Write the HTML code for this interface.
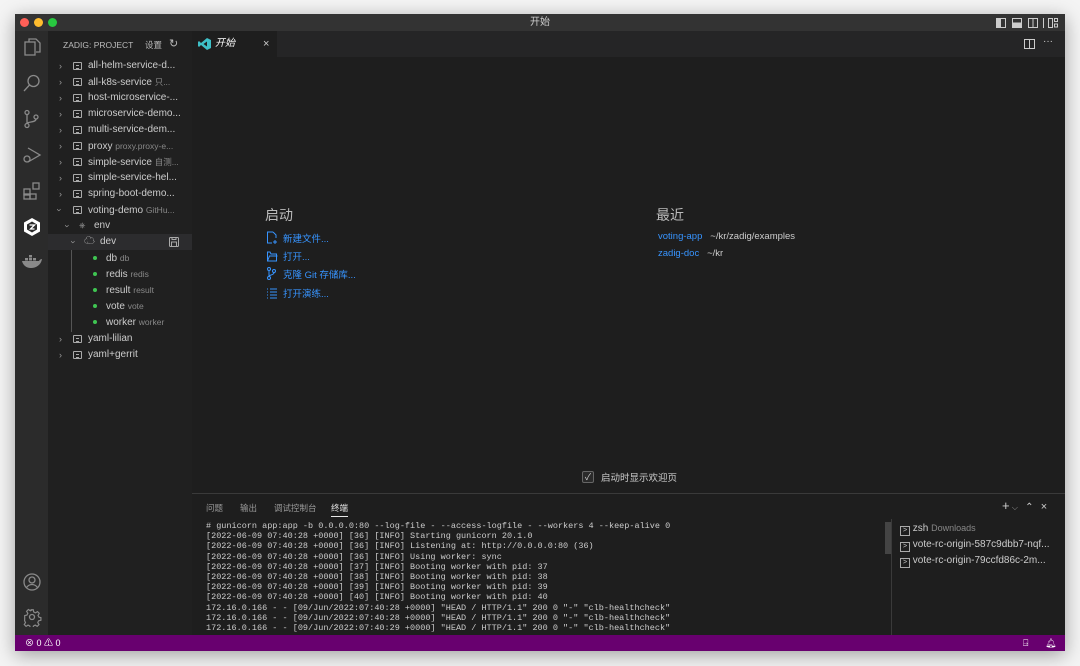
<!DOCTYPE html>
<html><head><meta charset="utf-8"><style>
*{margin:0;padding:0;box-sizing:border-box}
body{width:1080px;height:666px;background:#f4f4f4;position:relative;overflow:hidden;font-family:"Liberation Sans","Noto Sans CJK SC",sans-serif;color:#ccc}
.win{position:absolute;left:15px;top:14px;width:1050px;height:637px;background:#1e1e1e;box-shadow:0 4px 18px rgba(0,0,0,.35);overflow:hidden}
.a{position:absolute}
.title{left:0;top:0;width:1050px;height:17px;background:#333;text-align:center;font-size:10px;line-height:17px;color:#ccc}
.dot{position:absolute;top:4px;width:9px;height:9px;border-radius:50%}
.act{left:0;top:17px;width:33px;height:604px;background:#2b2b2b}
.side{left:33px;top:17px;width:144px;height:604px;background:#202020;font-size:10px}
.row{position:absolute;left:0;width:144px;height:16px;line-height:16px;white-space:nowrap;color:#ccc}
.row .c{position:absolute;top:0;color:#999;font-size:9px}
.row .d{color:#888;font-size:8.5px}
.fi{position:absolute;top:4px;width:9px;height:8px;border:1px solid #aaa;border-radius:1px}
.fi:after{content:"";position:absolute;left:2px;top:2px;width:3px;height:2px;border-top:1px solid #aaa;border-bottom:1px solid #aaa}
.tabs{left:177px;top:17px;width:873px;height:26px;background:#252526}
.tab{left:177px;top:17px;width:85px;height:26px;background:#1e1e1e;font-size:10px;line-height:26px}
.lnk{color:#3794ff;font-size:9.5px}
.panel{left:177px;top:479px;width:873px;height:142px;background:#1e1e1e;border-top:1px solid #3a3a3a}
.term{font-family:"Liberation Mono",monospace;font-size:8.5px;line-height:10.2px;color:#ccc;white-space:pre}
.status{left:0;top:621px;width:1050px;height:16px;background:#68006f;color:#fff;font-size:9px;line-height:16px}
svg{position:absolute}
</style></head><body>
<div class="win">
<div class="a title">开始
<span class="dot" style="left:5px;background:#fe5f57"></span><span class="dot" style="left:19px;background:#febc2e"></span><span class="dot" style="left:33px;background:#28c840"></span>
</div>
<svg style="left:980px;top:3px" width="65" height="12" viewBox="0 0 65 12" fill="none" stroke="#ccc" stroke-width="1"><rect x="1.5" y="1.5" width="9" height="9"/><rect x="1.5" y="1.5" width="4" height="9" fill="#ccc"/><rect x="17.5" y="1.5" width="9" height="9"/><rect x="17.5" y="6" width="9" height="4.5" fill="#ccc"/><rect x="33.5" y="1.5" width="9" height="9"/><line x1="38" y1="1.5" x2="38" y2="10.5"/><line x1="48.5" y1="1" x2="48.5" y2="11"/><rect x="53.5" y="1.5" width="4" height="9"/><rect x="59.5" y="1.5" width="3" height="3"/><rect x="59.5" y="7" width="3" height="3"/></svg>

<div class="a act">
<svg style="left:7px;top:6px" width="20" height="20" viewBox="0 0 20 20" fill="none" stroke="#8a8a8a" stroke-width="1.3"><path d="M7 5V2h7l4 4v9h-4"/><rect x="3" y="5" width="10" height="13"/></svg>
<svg style="left:7px;top:42px" width="20" height="20" viewBox="0 0 20 20" fill="none" stroke="#8a8a8a" stroke-width="1.3"><circle cx="11.5" cy="8" r="5.5"/><path d="M7.5 12L2 18"/></svg>
<svg style="left:7px;top:78px" width="20" height="20" viewBox="0 0 20 20" fill="none" stroke="#8a8a8a" stroke-width="1.3"><circle cx="5" cy="3.5" r="2"/><circle cx="5" cy="16.5" r="2"/><circle cx="14" cy="8" r="2"/><path d="M5 5.5v9M14 10c0 4-9 2-9 5"/></svg>
<svg style="left:7px;top:114px" width="20" height="20" viewBox="0 0 20 20" fill="none" stroke="#8a8a8a" stroke-width="1.3"><path d="M6 3l12 7-12 7"/><circle cx="5" cy="14" r="3"/></svg>
<svg style="left:7px;top:150px" width="20" height="20" viewBox="0 0 20 20" fill="none" stroke="#8a8a8a" stroke-width="1.3"><rect x="2" y="8" width="6" height="6"/><rect x="2" y="13" width="6" height="5"/><rect x="8" y="13" width="6" height="5"/><rect x="11" y="2" width="6" height="6"/></svg>
<svg style="left:7px;top:186px" width="20" height="20" viewBox="0 0 20 20"><path d="M10 1l8 4.5v9L10 19l-8-4.5v-9z" fill="#fff"/><path d="M10 4.5l5 3v5l-5 3-5-3v-5z" fill="#2b2b2b"/><path d="M7.5 8h5l-4 4h4" stroke="#fff" stroke-width="1.3" fill="none"/></svg>
<svg style="left:6px;top:222px" width="22" height="16" viewBox="0 0 22 16"><path d="M1 8h17c1-2 3-2 3-2-1 6-6 9-11 9C5 15 2 12 1 8z" fill="#8a8a8a"/><rect x="4" y="5" width="3" height="2.5" fill="#8a8a8a"/><rect x="8" y="5" width="3" height="2.5" fill="#8a8a8a"/><rect x="12" y="5" width="3" height="2.5" fill="#8a8a8a"/><rect x="8" y="2" width="3" height="2.5" fill="#8a8a8a"/></svg>
<svg style="left:7px;top:541px" width="20" height="20" viewBox="0 0 20 20" fill="none" stroke="#8a8a8a" stroke-width="1.3"><circle cx="10" cy="10" r="8"/><circle cx="10" cy="8" r="3"/><path d="M4.5 15.5c3-4 8-4 11 0"/></svg>
<svg style="left:7px;top:576px" width="20" height="20" viewBox="0 0 20 20" fill="none" stroke="#8a8a8a" stroke-width="1.3"><circle cx="10" cy="10" r="2.5"/><path d="M8.5 2h3l.5 2.5 2 1 2.2-1.4 2 2-1.4 2.2 1 2 2.2.5v3l-2.5.5-1 2 1.4 2.2-2 2-2.2-1.4-2 1-.5 2.5h-3l-.5-2.5-2-1-2.2 1.4-2-2 1.4-2.2-1-2L2 11.5v-3l2.5-.5 1-2-1.4-2.2 2-2 2.2 1.4 2-1z" transform="scale(.9) translate(1 1)"/></svg>
</div>

<div class="a side">
<div class="row" style="top:6px;left:15px;font-size:8.5px;color:#bbb">ZADIG: PROJECT<span style="position:absolute;left:82px">设置</span><span style="position:absolute;left:106px;font-size:11px;top:-1px">↻</span></div>
<div class="row" style="top:27px"><span class="c" style="left:11px">›</span><i class="fi" style="left:25px"></i><span style="position:absolute;left:40px">all-helm-service-d...</span></div>
<div class="row" style="top:43px"><span class="c" style="left:11px">›</span><i class="fi" style="left:25px"></i><span style="position:absolute;left:40px">all-k8s-service <span class="d">只...</span></span></div>
<div class="row" style="top:59px"><span class="c" style="left:11px">›</span><i class="fi" style="left:25px"></i><span style="position:absolute;left:40px">host-microservice-...</span></div>
<div class="row" style="top:75px"><span class="c" style="left:11px">›</span><i class="fi" style="left:25px"></i><span style="position:absolute;left:40px">microservice-demo...</span></div>
<div class="row" style="top:91px"><span class="c" style="left:11px">›</span><i class="fi" style="left:25px"></i><span style="position:absolute;left:40px">multi-service-dem...</span></div>
<div class="row" style="top:107px"><span class="c" style="left:11px">›</span><i class="fi" style="left:25px"></i><span style="position:absolute;left:40px">proxy <span class="d">proxy.proxy-e...</span></span></div>
<div class="row" style="top:123px"><span class="c" style="left:11px">›</span><i class="fi" style="left:25px"></i><span style="position:absolute;left:40px">simple-service <span class="d">自测...</span></span></div>
<div class="row" style="top:139px"><span class="c" style="left:11px">›</span><i class="fi" style="left:25px"></i><span style="position:absolute;left:40px">simple-service-hel...</span></div>
<div class="row" style="top:155px"><span class="c" style="left:11px">›</span><i class="fi" style="left:25px"></i><span style="position:absolute;left:40px">spring-boot-demo...</span></div>
<div class="row" style="top:171px"><span class="c" style="left:10px;transform:rotate(90deg)">›</span><i class="fi" style="left:25px"></i><span style="position:absolute;left:40px">voting-demo <span class="d">GitHu...</span></span></div>
<div class="row" style="top:187px"><span class="c" style="left:18px;transform:rotate(90deg)">›</span><span style="position:absolute;left:31px;color:#999;font-size:8px">⎈</span><span style="position:absolute;left:46px">env</span></div>
<div class="row" style="top:203px;background:#2c2c2e"><span class="c" style="left:24px;transform:rotate(90deg)">›</span><span style="position:absolute;left:36px;color:#bbb;font-size:11px;top:-1px">☁</span><span style="position:absolute;left:52px">dev</span><svg style="left:121px;top:3px" width="10" height="10" viewBox="0 0 10 10" fill="none" stroke="#aaa"><rect x=".5" y=".5" width="9" height="9" rx="1"/><rect x="2.5" y="5" width="5" height="4.5"/><path d="M3 .5v2h4v-2"/></svg></div>
<div class="a" style="left:23px;top:219px;width:1px;height:82px;background:#555"></div>
<div class="row" style="top:219px"><span style="position:absolute;left:45px;top:6px;width:4px;height:4px;border-radius:50%;background:#3fc552"></span><span style="position:absolute;left:58px">db <span class="d">db</span></span></div>
<div class="row" style="top:235px"><span style="position:absolute;left:45px;top:6px;width:4px;height:4px;border-radius:50%;background:#3fc552"></span><span style="position:absolute;left:58px">redis <span class="d">redis</span></span></div>
<div class="row" style="top:251px"><span style="position:absolute;left:45px;top:6px;width:4px;height:4px;border-radius:50%;background:#3fc552"></span><span style="position:absolute;left:58px">result <span class="d">result</span></span></div>
<div class="row" style="top:267px"><span style="position:absolute;left:45px;top:6px;width:4px;height:4px;border-radius:50%;background:#3fc552"></span><span style="position:absolute;left:58px">vote <span class="d">vote</span></span></div>
<div class="row" style="top:283px"><span style="position:absolute;left:45px;top:6px;width:4px;height:4px;border-radius:50%;background:#3fc552"></span><span style="position:absolute;left:58px">worker <span class="d">worker</span></span></div>
<div class="row" style="top:300px"><span class="c" style="left:11px">›</span><i class="fi" style="left:25px"></i><span style="position:absolute;left:40px">yaml-lilian</span></div>
<div class="row" style="top:316px"><span class="c" style="left:11px">›</span><i class="fi" style="left:25px"></i><span style="position:absolute;left:40px">yaml+gerrit</span></div>
</div>

<div class="a tabs"></div>
<div class="a tab"><svg style="left:6px;top:7px" width="13" height="12" viewBox="0 0 13 12"><path d="M9 0l4 2v8l-4 2-6-5-2 2-1-1v-4l1-1 2 2zM9 3.5L5.5 6 9 8.5z" fill="#3ec0c8"/></svg><span style="position:absolute;left:23px;font-style:italic;color:#fff">开始</span><span style="position:absolute;left:71px;color:#ccc;font-size:11px">×</span></div>
<svg style="left:1009px;top:25px" width="11" height="10" viewBox="0 0 11 10" fill="none" stroke="#ccc"><rect x=".5" y=".5" width="10" height="9"/><path d="M5.5 .5v9"/></svg>
<div class="a" style="left:1028px;top:22px;font-size:10px;color:#ccc">···</div>

<div class="a" style="left:250px;top:191px;font-size:14px;color:#bbb">启动</div>
<div class="a lnk" style="left:268px;top:217px">新建文件...</div>
<div class="a lnk" style="left:268px;top:235px">打开...</div>
<div class="a lnk" style="left:268px;top:253px">克隆 Git 存储库...</div>
<div class="a lnk" style="left:268px;top:272px">打开演练...</div>
<svg style="left:251px;top:217px" width="12" height="75" viewBox="0 0 12 75" fill="none" stroke="#3794ff"><path d="M7 1H1.5v11H6M7 1l3 3v3M9 9v4M7 11h4"/><path d="M1.5 21v9h9v-7H5L4 21zM1.5 30l2-5h8"/><circle cx="3" cy="38" r="1.5"/><circle cx="3" cy="47" r="1.5"/><circle cx="8" cy="40" r="1.5"/><path d="M3 39.5v6M8 41.5c0 3-5 2-5 4"/><path d="M1 58h1M1 61h1M1 64h1M1 67h1M4 58h7M4 61h7M4 64h7M4 67h7"/></svg>
<div class="a" style="left:641px;top:191px;font-size:14px;color:#bbb">最近</div>
<div class="a" style="left:643px;top:217px;font-size:9.5px"><span class="lnk">voting-app</span>&nbsp;&nbsp;&nbsp;<span style="color:#ccc">~/kr/zadig/examples</span></div>
<div class="a" style="left:643px;top:234px;font-size:9.5px"><span class="lnk">zadig-doc</span>&nbsp;&nbsp;&nbsp;<span style="color:#ccc">~/kr</span></div>
<div class="a" style="left:567px;top:457px;width:12px;height:12px;border:1px solid #666;border-radius:2px;background:#2a2a2a;color:#ccc;font-size:9px;line-height:10px;text-align:center">✓</div>
<div class="a" style="left:586px;top:456px;font-size:9.5px;color:#ccc">启动时显示欢迎页</div>

<div class="a panel">
<div class="a" style="left:14px;top:8px;font-size:8.5px;color:#999">问题</div>
<div class="a" style="left:48px;top:8px;font-size:8.5px;color:#999">输出</div>
<div class="a" style="left:82px;top:8px;font-size:8.5px;color:#999">调试控制台</div>
<div class="a" style="left:139px;top:8px;font-size:8.5px;color:#e7e7e7">终端</div>
<div class="a" style="left:139px;top:22px;width:17px;height:1px;background:#e7e7e7"></div>
<div class="a" style="left:810px;top:4px;font-size:13px;color:#ccc">+<span style="font-size:8px;color:#999"> ⌵</span>&nbsp;&nbsp;<span style="font-size:10px">⌃</span>&nbsp;&nbsp;<span style="font-size:11px">×</span></div>
<div class="a term" style="left:14px;top:27px"># gunicorn app:app -b 0.0.0.0:80 --log-file - --access-logfile - --workers 4 --keep-alive 0
[2022-06-09 07:40:28 +0000] [36] [INFO] Starting gunicorn 20.1.0
[2022-06-09 07:40:28 +0000] [36] [INFO] Listening at: http://0.0.0.0:80 (36)
[2022-06-09 07:40:28 +0000] [36] [INFO] Using worker: sync
[2022-06-09 07:40:28 +0000] [37] [INFO] Booting worker with pid: 37
[2022-06-09 07:40:28 +0000] [38] [INFO] Booting worker with pid: 38
[2022-06-09 07:40:28 +0000] [39] [INFO] Booting worker with pid: 39
[2022-06-09 07:40:28 +0000] [40] [INFO] Booting worker with pid: 40
172.16.0.166 - - [09/Jun/2022:07:40:28 +0000] "HEAD / HTTP/1.1" 200 0 "-" "clb-healthcheck"
172.16.0.166 - - [09/Jun/2022:07:40:28 +0000] "HEAD / HTTP/1.1" 200 0 "-" "clb-healthcheck"
172.16.0.166 - - [09/Jun/2022:07:40:29 +0000] "HEAD / HTTP/1.1" 200 0 "-" "clb-healthcheck"</div>
<div class="a" style="left:693px;top:28px;width:6px;height:32px;background:#444"></div>
<div class="a" style="left:699px;top:25px;width:1px;height:117px;background:#3a3a3a"></div>
<div class="a" style="left:708px;top:26px;font-size:10px;line-height:16px;color:#ccc;white-space:nowrap">
<div><span style="display:inline-block;width:10px;height:10px;border:1px solid #aaa;font-size:7px;line-height:8px;text-align:center;vertical-align:-1px">&gt;</span> zsh <span style="color:#888;font-size:9px">Downloads</span></div>
<div><span style="display:inline-block;width:10px;height:10px;border:1px solid #aaa;font-size:7px;line-height:8px;text-align:center;vertical-align:-1px">&gt;</span> vote-rc-origin-587c9dbb7-nqf...</div>
<div><span style="display:inline-block;width:10px;height:10px;border:1px solid #aaa;font-size:7px;line-height:8px;text-align:center;vertical-align:-1px">&gt;</span> vote-rc-origin-79ccfd86c-2m...</div>
</div>
</div>

<div class="a status"><span style="position:absolute;left:10px">⊗ 0 ⚠ 0</span><span style="position:absolute;left:1008px">⍈</span><span style="position:absolute;left:1030px">🔔︎</span></div>
</div>
</body></html>
